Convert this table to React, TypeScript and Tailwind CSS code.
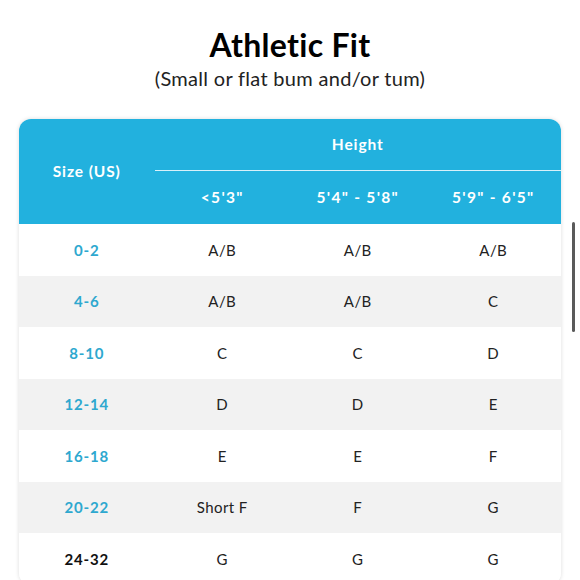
import React from 'react';

const rows: { size: string; cells: string[] }[] = [
  { size: '0-2', cells: ['A/B', 'A/B', 'A/B'] },
  { size: '4-6', cells: ['A/B', 'A/B', 'C'] },
  { size: '8-10', cells: ['C', 'C', 'D'] },
  { size: '12-14', cells: ['D', 'D', 'E'] },
  { size: '16-18', cells: ['E', 'E', 'F'] },
  { size: '20-22', cells: ['Short F', 'F', 'G'] },
  { size: '24-32', cells: ['G', 'G', 'G'] },
];

const heights = ['<5\'3"', '5\'4" - 5\'8"', '5\'9" - 6\'5"'];

export default function App() {
  return (
    <div className="relative w-[580px] h-[580px] overflow-hidden bg-white font-['Lato',sans-serif]">
      {/* Title */}
      <div className="flex flex-col items-center pt-[25px]">
        <h1 className="text-[32px] leading-[40px] font-bold text-black tracking-[0.3px]">Athletic Fit</h1>
        <p className="text-[20px] leading-[24px] text-[#222] tracking-[0.3px] mt-[1px]">
          (Small or flat bum and/or tum)
        </p>
      </div>

      {/* Table card */}
      <div className="mx-[19px] mt-[29px] rounded-[12px] overflow-hidden bg-white shadow-[0_0_4px_rgba(0,0,0,0.14)]">
        {/* Header */}
        <div className="grid grid-cols-4 bg-[#22b1de] text-white font-bold text-[15.5px] tracking-[0.9px]">
          <div className="row-span-2 flex items-center justify-center">Size (US)</div>
          <div className="col-span-3 h-[52px] flex items-center justify-center border-b border-[#d8f1fa]">
            Height
          </div>
          {heights.map((h) => (
            <div key={h} className="h-[53px] flex items-center justify-center tracking-[1.3px]">
              {h}
            </div>
          ))}
        </div>

        {/* Body */}
        {rows.map((r, i) => (
          <div
            key={r.size}
            className={`grid grid-cols-4 h-[51.5px] items-center text-center text-[15px] ${
              i % 2 === 1 ? 'bg-[#f2f2f2]' : 'bg-white'
            }`}
          >
            <div
              className={`font-bold tracking-[0.8px] ${
                i === rows.length - 1 ? 'text-[#111]' : 'text-[#2ea8cf]'
              }`}
            >
              {r.size}
            </div>
            {r.cells.map((c, j) => (
              <div key={j} className="text-[#222] tracking-[0.4px]">
                {c}
              </div>
            ))}
          </div>
        ))}
      </div>

      {/* Scrollbar */}
      <div className="absolute left-[572px] top-[222px] w-[3px] h-[110px] rounded-full bg-[#5a5a5a]" />
    </div>
  );
}
